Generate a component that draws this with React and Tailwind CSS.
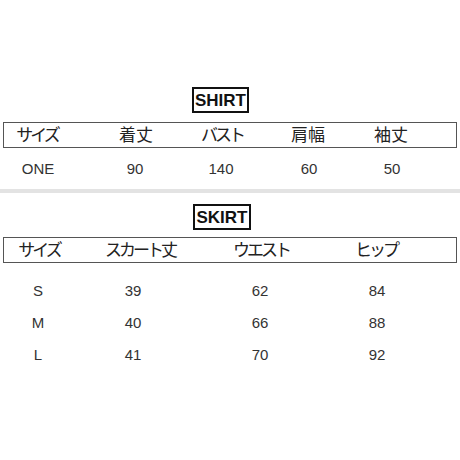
import React from 'react';

const FONT = { fontFamily: '"Liberation Sans", "Noto Sans CJK JP", sans-serif' };

const App = () => (
    <div className="w-[460px] h-[460px] bg-white text-[#111] pt-[87px]" style={FONT}>

        {/* SHIRT */}
        <div className="ml-[192px] w-[57px] h-[26px] border-2 border-[#111] flex items-center justify-center text-[17px] font-bold leading-none">
            SHIRT
        </div>

        <div className="mt-[9px] mx-[3px] h-[26px] border border-[#555] flex items-center text-[17px] text-[#222] leading-none">
            <div className="w-[60px] ml-[3px] text-center tracking-[-3px]">サイズ</div>
            <div className="w-[60px] ml-[39px] text-center">着丈</div>
            <div className="w-[60px] ml-[26px] text-center tracking-[-3px]">バスト</div>
            <div className="w-[60px] ml-[26px] text-center">肩幅</div>
            <div className="w-[60px] ml-[23px] text-center">袖丈</div>
        </div>

        <div className="h-[41px] flex items-center text-[15px] text-[#333] leading-none">
            <div className="w-[60px] ml-[8px] text-center">ONE</div>
            <div className="w-[60px] ml-[37px] text-center">90</div>
            <div className="w-[60px] ml-[26px] text-center">140</div>
            <div className="w-[60px] ml-[28px] text-center">60</div>
            <div className="w-[60px] ml-[23px] text-center">50</div>
        </div>

        <div className="h-[4px] bg-[#e3e3e3]" />

        {/* SKIRT */}
        <div className="mt-[11px] ml-[193px] w-[58px] h-[26px] border-2 border-[#111] flex items-center justify-center text-[17px] font-bold leading-none">
            SKIRT
        </div>

        <div className="mt-[7px] mx-[3px] h-[26px] border border-[#555] flex items-center text-[17px] text-[#222] leading-none tracking-[-3px]">
            <div className="w-[70px] text-center">サイズ</div>
            <div className="w-[80px] ml-[26px] text-center">スカート丈</div>
            <div className="w-[70px] ml-[46px] text-center">ウエスト</div>
            <div className="w-[70px] ml-[45px] text-center">ヒップ</div>
        </div>

        <div className="mt-[11px] text-[15px] text-[#333] leading-none">
            {[
                ['S', '39', '62', '84'],
                ['M', '40', '66', '88'],
                ['L', '41', '70', '92'],
            ].map(row => (
                <div key={row[0]} className="h-[32px] flex items-center">
                    <div className="w-[60px] ml-[8px] text-center">{row[0]}</div>
                    <div className="w-[60px] ml-[35px] text-center">{row[1]}</div>
                    <div className="w-[60px] ml-[67px] text-center">{row[2]}</div>
                    <div className="w-[60px] ml-[57px] text-center">{row[3]}</div>
                </div>
            ))}
        </div>

    </div>
);

export default App;
